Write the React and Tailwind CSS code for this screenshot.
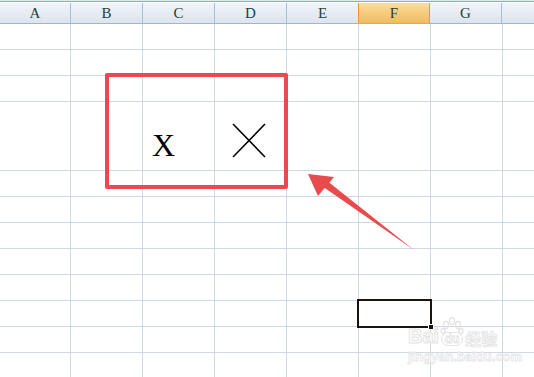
import React from "react";

const cols = ["A", "B", "C", "D", "E", "F", "G", ""];
const colWidths = ["w-[71px]", "w-[72px]", "w-[72px]", "w-[72px]", "w-[72px]", "w-[72px]", "w-[72px]", "w-[40px]"];
const rowHeights = ["h-[26px]", "h-[26px]", "h-[26px]", "h-[69px]", "h-[26px]", "h-[26px]", "h-[26px]", "h-[26px]", "h-[26px]", "h-[26px]", "h-[26px]", "h-[26px]", "h-[26px]"];

const HeaderCell = ({ label, index }) => {
  const active = label === "F";
  return (
    <div
      className={`${colWidths[index]} shrink-0 h-full flex items-center justify-center border-r text-[15px] font-['Liberation_Serif',serif] text-[#26403d] ${
        active
          ? "bg-gradient-to-b from-[#f9dda0] to-[#f2bb58] border-r-[#f29536] border-l border-l-[#f29536] -ml-px"
          : "bg-gradient-to-b from-[#f1f4f9] to-[#dce4ee] border-r-[#a9bdd3]"
      }`}
    >
      {label}
    </div>
  );
};

const Cell = ({ r, c }) => {
  let content = null;
  if (r === 3 && c === 2) {
    content = (
      <div className="h-full flex items-end pl-[9px] pb-[9px] font-['Liberation_Serif',serif] text-[32px] leading-none text-black">
        X
      </div>
    );
  }
  if (r === 3 && c === 3) {
    content = (
      <div className="h-full pt-[21px] pl-[17px]">
        <svg width="34" height="35" viewBox="0 0 34 35">
          <line x1="1" y1="1" x2="33" y2="34" stroke="#000" strokeWidth="1.6" />
          <line x1="33" y1="1" x2="1" y2="34" stroke="#000" strokeWidth="1.6" />
        </svg>
      </div>
    );
  }
  return (
    <div className={`${colWidths[c]} shrink-0 h-full border-r border-[#d0d7e5]`}>{content}</div>
  );
};

export default function App() {
  return (
    <div className="relative w-[534px] h-[377px] overflow-hidden bg-white">
      <div className="h-px bg-[#dfe7f1]" />
      <div className="h-px bg-[#8eabcf]" />
      <div className="h-px bg-white" />
      <div className="flex h-[21px] border-b border-[#9eb5ce]">
        {cols.map((c, i) => (
          <HeaderCell key={i} label={c} index={i} />
        ))}
      </div>
      {rowHeights.map((h, r) => (
        <div key={r} className={`flex ${h} border-b border-[#d0d7e5]`}>
          {cols.map((_, c) => (
            <Cell key={c} r={r} c={c} />
          ))}
        </div>
      ))}

      {/* red annotation box */}
      <div className="absolute left-[105px] top-[73px] w-[183px] h-[116px] border-[4px] border-[#ea4a4d] rounded-[2px]" />

      {/* arrow */}
      <svg className="absolute left-0 top-0" width="534" height="377">
        <path d="M414 250 L322 186 L326 180 Z" fill="#e94a4c" />
        <path d="M308 174 L334 177 L318 196 Z" fill="#e94a4c" />
      </svg>

      {/* selected cell */}
      <div className="absolute left-[357px] top-[299px] w-[75px] h-[29px] border-2 border-[#1a1410]" />
      <div className="absolute left-[428px] top-[324px] w-[6px] h-[6px] bg-[#1a1410] border border-white" />

      {/* watermark */}
      <div className="absolute left-[408px] top-[317px] flex flex-col items-start pointer-events-none select-none">
        <div className="flex items-end leading-none">
          <span className="font-['Liberation_Sans',sans-serif] font-bold text-[20px] text-white [-webkit-text-stroke:1px_#e3e3e3]">
            Bai
          </span>
          <div className="ml-[1px] flex flex-col items-center">
            <svg width="24" height="18" viewBox="0 0 24 18">
              <g fill="none" stroke="#e3e3e3" strokeWidth="1.3">
                <ellipse cx="6" cy="8" rx="2.5" ry="3.5" />
                <ellipse cx="12" cy="4" rx="2.5" ry="3.5" />
                <ellipse cx="18" cy="8" rx="2.5" ry="3.5" />
                <ellipse cx="3" cy="14" rx="2" ry="2.5" />
                <ellipse cx="21" cy="14" rx="2" ry="2.5" />
              </g>
            </svg>
            <span className="-mt-[3px] px-[3px] rounded-full border border-[#e3e3e3] font-['Liberation_Sans',sans-serif] font-bold text-[12px] text-white [-webkit-text-stroke:0.8px_#e3e3e3]">
              du
            </span>
          </div>
          <span className="ml-[1px] font-['Noto_Sans_CJK_SC',sans-serif] font-bold text-[16px] text-white [-webkit-text-stroke:0.8px_#e3e3e3]">
            经验
          </span>
        </div>
        <span className="mt-[4px] font-['Liberation_Sans',sans-serif] font-bold text-[13px] leading-none text-white [-webkit-text-stroke:0.8px_#e6e6e6]">
          jingyan.baidu.com
        </span>
      </div>
    </div>
  );
}
